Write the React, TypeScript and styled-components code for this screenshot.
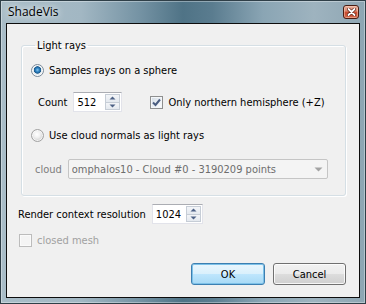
import { createGlobalStyle, styled } from 'styled-components';

const GlobalStyle = createGlobalStyle`
  html, body {
    margin: 0;
    padding: 0;
    background: #ffffff;
  }
  * {
    box-sizing: border-box;
  }
`;

const uiFont = `"DejaVu Sans Condensed", "Liberation Sans", sans-serif`;

const App = () => {
  return (
    <>
      <GlobalStyle />
      <Window>
        <TitleBar>
          <Caption>ShadeVis</Caption>
          <CloseButton aria-label='Close'>
            <svg width='9' height='8' viewBox='0 0 9 8'>
              <path d='M1.5 1 L7.5 7 M7.5 1 L1.5 7' stroke='#5a2214' strokeWidth='3.2' strokeLinecap='round' />
              <path d='M1.5 1 L7.5 7 M7.5 1 L1.5 7' stroke='#ffffff' strokeWidth='1.8' strokeLinecap='round' />
            </svg>
          </CloseButton>
        </TitleBar>

        <Client>
          <Group>
            <Legend>Light rays</Legend>
            <Row $top={0}>
              <Radio $checked />
              <Label>Samples rays on a sphere</Label>
            </Row>
            <Row $top={12} $indent={7}>
              <Label>Count</Label>
              <SpinBox $width={49}>
                <SpinValue>512</SpinValue>
                <SpinArrows />
              </SpinBox>
              <CheckGap />
              <CheckBox>
                <svg width='9' height='9' viewBox='0 0 9 9'>
                  <path d='M1 4.5 L3.5 7 L8 1.5' fill='none' stroke='#4a5d80' strokeWidth='2' />
                </svg>
              </CheckBox>
              <Label>Only northern hemisphere (+Z)</Label>
            </Row>
            <Row $top={13}>
              <Radio />
              <Label>Use cloud normals as light rays</Label>
            </Row>
            <Row $top={14} $indent={4}>
              <Label $disabled>cloud</Label>
              <Combo>
                <ComboText>omphalos10 - Cloud #0 - 3190209 points</ComboText>
                <ComboArrow />
              </Combo>
            </Row>
          </Group>

          <Row $top={8}>
            <Label $flush>Render context resolution</Label>
            <SpinBox $width={51}>
              <SpinValue>1024</SpinValue>
              <SpinArrows />
            </SpinBox>
          </Row>

          <Row $top={9} $height={14} $indent={1}>
            <CheckBox $disabled />
            <Label $disabled $faint>closed mesh</Label>
          </Row>

          <Buttons>
            <Button $default>OK</Button>
            <Button $width={73}>Cancel</Button>
          </Buttons>
        </Client>
      </Window>
    </>
  );
};

const SpinArrows = () => (
  <Arrows>
    <ArrowHalf>
      <svg width='7' height='4' viewBox='0 0 7 4'>
        <path d='M0.5 3.5 L3.5 0.5 L6.5 3.5 Z' fill='#4d6185' />
      </svg>
    </ArrowHalf>
    <ArrowHalf>
      <svg width='7' height='4' viewBox='0 0 7 4'>
        <path d='M0.5 0.5 L3.5 3.5 L6.5 0.5 Z' fill='#4d6185' />
      </svg>
    </ArrowHalf>
  </Arrows>
);

const ComboArrow = () => (
  <ComboArrowBox>
    <svg width='9' height='5' viewBox='0 0 9 5'>
      <path d='M0.5 0.5 L4.5 4.5 L8.5 0.5 Z' fill='#a3a3a3' />
    </svg>
  </ComboArrowBox>
);

export default App;

const Window = styled.div`
  width: 366px;
  height: 304px;
  display: flex;
  flex-direction: column;
  border: 1px solid #2f3f48;
  background:
    linear-gradient(90deg, #a9bdc8 0%, #a2b7c3 22%, #7593a4 38%, #4f7386 50%, #5a7c8f 58%, #8aa5b4 72%, #9eb3bf 86%, #8ea6b3 100%);
  box-shadow: inset 0 0 0 1px rgba(255, 255, 255, 0.35);
`;

const TitleBar = styled.div`
  height: 22px;
  display: flex;
  align-items: center;
  justify-content: space-between;
  padding: 0 6px 0 7px;
`;

const Caption = styled.span`
  font-family: "Open Sans", "Noto Sans", sans-serif;
  font-size: 12px;
  color: #000000;
  text-shadow: 0 0 6px rgba(255, 255, 255, 0.9), 0 0 10px rgba(255, 255, 255, 0.7);
  margin-top: -1px;
`;

const CloseButton = styled.div`
  width: 16px;
  height: 14px;
  margin-top: -1px;
  display: flex;
  align-items: center;
  justify-content: center;
  border: 1px solid #4a1d12;
  border-radius: 3px;
  background: linear-gradient(180deg, #eab09d 0%, #dc8a72 40%, #c84a2e 55%, #d2674a 100%);
  box-shadow: inset 0 0 0 1px rgba(255, 220, 200, 0.45);
`;

const Client = styled.div`
  flex: 1;
  margin: 0 5px 5px;
  border: 1px solid #0d0d0d;
  background: #f0f0f0;
  display: flex;
  flex-direction: column;
  padding: 15px 13px 0 11px;
  font-family: ${uiFont};
  font-size: 11px;
  color: #000000;
`;

const Group = styled.fieldset`
  margin: 0 0 0 3px;
  padding: 8px 0 16px 9px;
  min-inline-size: 0;
  border: 1px solid #d5dfe5;
  border-radius: 3px;
  box-shadow: inset 1px 1px 0 #ffffff, 1px 1px 0 #ffffff;
  display: flex;
  flex-direction: column;
`;

const Legend = styled.legend`
  margin-left: 4px;
  padding: 0 2px;
  line-height: 13px;
  font-size: 11px;
`;

const Row = styled.div<{ $top?: number; $indent?: number; $height?: number }>`
  display: flex;
  align-items: center;
  height: ${(p) => p.$height ?? 20}px;
  margin-top: ${(p) => p.$top ?? 0}px;
  padding-left: ${(p) => p.$indent ?? 0}px;
`;

const Label = styled.span<{ $disabled?: boolean; $faint?: boolean; $flush?: boolean }>`
  white-space: nowrap;
  margin-left: ${(p) => (p.$flush ? 0 : 4)}px;
  margin-right: 6px;
  color: ${(p) => (p.$faint ? '#a1a1a1' : p.$disabled ? '#7d7d7d' : '#000000')};

  &:first-child {
    margin-left: 0;
  }
`;

const Radio = styled.span<{ $checked?: boolean }>`
  width: 13px;
  height: 13px;
  flex: none;
  border-radius: 50%;
  margin-right: 1px;
  border: 1px solid ${(p) => (p.$checked ? '#7b8a99' : '#a2a2a2')};
  background: ${(p) =>
    p.$checked
      ? 'radial-gradient(circle at 50% 45%, #86c6ef 0px, #2b7fbf 2px, #1d5a8c 3.4px, #dfe6ec 4px, #f4f4f4 6px)'
      : 'radial-gradient(circle at 45% 40%, #ffffff 0px, #f2f2f2 3px, #d6d6d6 6px)'};
  box-shadow: inset 0 0 0 1px rgba(255, 255, 255, 0.7);
`;

const CheckGap = styled.span`
  width: 28px;
  flex: none;
`;

const CheckBox = styled.span<{ $disabled?: boolean }>`
  width: 13px;
  height: 13px;
  flex: none;
  border: 1px solid ${(p) => (p.$disabled ? '#bcbcbc' : '#8e8f8f')};
  background: ${(p) =>
    p.$disabled
      ? '#f4f4f4'
      : 'linear-gradient(135deg, #d2dbe4 0%, #eef2f6 60%, #ffffff 100%)'};
  box-shadow: inset 0 0 0 1px ${(p) => (p.$disabled ? '#fafafa' : '#f3f6f9')};
  margin-right: 1px;
  display: flex;
  align-items: center;
  justify-content: center;
`;

const SpinBox = styled.div<{ $width: number }>`
  width: ${(p) => p.$width}px;
  height: 20px;
  flex: none;
  display: flex;
  align-items: stretch;
  background: #ffffff;
  border: 1px solid #e2e3ea;
  border-top-color: #abadb3;
  padding: 1px;
`;

const SpinValue = styled.span`
  flex: 1;
  display: flex;
  align-items: center;
  padding-left: 2px;
`;

const Arrows = styled.span`
  width: 15px;
  display: flex;
  flex-direction: column;
`;

const ArrowHalf = styled.span`
  flex: 1;
  display: flex;
  align-items: center;
  justify-content: center;
  background: linear-gradient(180deg, #f3f5f8 0%, #e4e9ef 100%);
  border: 1px solid #c6cdd6;

  & + & {
    border-top: none;
  }
`;

const Combo = styled.div`
  flex: 1;
  height: 20px;
  margin-right: 17px;
  display: flex;
  align-items: center;
  border: 1px solid #c5c5c5;
  border-radius: 2px;
  background: #f4f4f4;
  padding-left: 3px;
`;

const ComboText = styled.span`
  flex: 1;
  white-space: nowrap;
  overflow: hidden;
  color: #6d6d6d;
`;

const ComboArrowBox = styled.span`
  width: 17px;
  display: flex;
  align-items: center;
  justify-content: center;
`;

const Buttons = styled.div`
  display: flex;
  justify-content: flex-end;
  gap: 8px;
  margin-top: 16px;
`;

const Button = styled.button<{ $default?: boolean; $width?: number }>`
  width: ${(p) => p.$width ?? 74}px;
  height: 22px;
  padding: 0;
  font-family: ${uiFont};
  font-size: 11px;
  color: #000000;
  border-radius: 3px;
  border: 1px solid ${(p) => (p.$default ? '#3c7fb1' : '#707070')};
  background: ${(p) =>
    p.$default
      ? 'linear-gradient(180deg, #eaf6fd 0%, #d9f0fc 50%, #bee6fd 51%, #a7d9f5 100%)'
      : 'linear-gradient(180deg, #f2f2f2 0%, #ebebeb 50%, #dddddd 51%, #cfcfcf 100%)'};
  box-shadow: inset 0 0 0 1px ${(p) => (p.$default ? '#7dc1e8' : 'rgba(255, 255, 255, 0.8)')};
`;
